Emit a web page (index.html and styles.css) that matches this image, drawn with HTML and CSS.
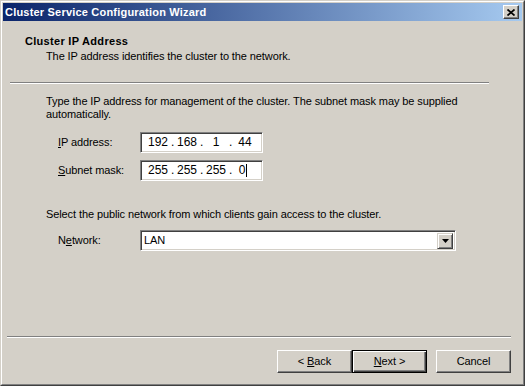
FILE: index.html
```html
<!DOCTYPE html>
<html>
<head>
<meta charset="utf-8">
<link rel="stylesheet" href="styles.css">
</head>
<body>
<div class="window">
  <div class="frame">
    <div class="titlebar">
      <span class="title">Cluster Service Configuration Wizard</span>
      <span class="close"><svg width="8" height="7" viewBox="0 0 8 7"><path d="M0.5 0.5 L7.5 6.5 M7.5 0.5 L0.5 6.5" stroke="#000" stroke-width="1.7" fill="none"/></svg></span>
    </div>
    <div class="body">
      <div class="header">
        <div class="h-title">Cluster IP Address</div>
        <div class="h-sub">The IP address identifies the cluster to the network.</div>
      </div>
      <div class="sep sep-top"></div>
      <p class="para p1">Type the IP address for management of the cluster. The subnet mask may be supplied<br>automatically.</p>
      <div class="row r1">
        <span class="lbl"><u>I</u>P address:</span>
        <div class="field ipbox">
          <span class="oct">192</span><span class="dot">.</span><span class="oct">168</span><span class="dot">.</span><span class="oct">1</span><span class="dot">.</span><span class="oct">44</span>
        </div>
      </div>
      <div class="row r2">
        <span class="lbl"><u>S</u>ubnet mask:</span>
        <div class="field ipbox">
          <span class="oct">255</span><span class="dot">.</span><span class="oct">255</span><span class="dot">.</span><span class="oct">255</span><span class="dot">.</span><span class="oct last">0<span class="caret"></span></span>
        </div>
      </div>
      <p class="para p2">Select the public network from which clients gain access to the cluster.</p>
      <div class="row r3">
        <span class="lbl">N<u>e</u>twork:</span>
        <div class="field combo">
          <span class="combo-text">LAN</span>
          <span class="drop"><svg width="7" height="4" viewBox="0 0 7 4"><path d="M0 0 H7 L3.5 4 Z" fill="#000"/></svg></span>
        </div>
      </div>
      <div class="footer">
        <div class="sep sep-bottom"></div>
        <div class="buttons">
          <span class="btn"><span>&lt; <u>B</u>ack</span></span>
          <span class="btn default"><span><u>N</u>ext &gt;</span></span>
          <span class="btn cancel"><span>Cancel</span></span>
        </div>
      </div>
    </div>
  </div>
</div>
</body>
</html>
```

FILE: styles.css
```css
html, body {
  margin: 0;
  padding: 0;
  background: #d4d0c8;
}
body {
  font-family: "Liberation Sans", Arial, sans-serif;
  font-size: 11px;
  line-height: 13px;
  letter-spacing: -0.1px;
  color: #000;
}
.window {
  width: 525px;
  height: 386px;
  box-sizing: border-box;
  border: 1px solid;
  border-color: #d4d0c8 #404040 #404040 #d4d0c8;
  background: #d4d0c8;
}
.frame {
  height: 100%;
  box-sizing: border-box;
  border: 1px solid;
  border-color: #fff #808080 #808080 #fff;
  padding: 1px;
  display: flex;
  flex-direction: column;
}
.titlebar {
  height: 18px;
  margin-bottom: 1px;
  background: linear-gradient(to right, #0a246a, #a6caf0);
  display: flex;
  align-items: center;
  justify-content: space-between;
}
.title {
  color: #fff;
  font-weight: bold;
  font-size: 11px;
  line-height: 18px;
  letter-spacing: 0.2px;
  padding-left: 2px;
}
.close {
  width: 16px;
  height: 14px;
  box-sizing: border-box;
  margin-right: 3px;
  background: #d4d0c8;
  border: 1px solid;
  border-color: #fff #404040 #404040 #fff;
  box-shadow: inset -1px -1px #808080;
  display: flex;
  align-items: center;
  justify-content: center;
}
.close svg {
  display: block;
  margin-left: -1px;
}
.body {
  flex: 1;
  display: flex;
  flex-direction: column;
}
.header {
  padding-top: 13px;
}
.h-title {
  font-weight: bold;
  letter-spacing: 0.3px;
  padding-left: 22px;
}
.h-sub {
  padding-left: 43px;
  margin-top: 2px;
}
.sep {
  border-top: 1px solid #808080;
  border-bottom: 1px solid #fff;
  height: 0;
}
.sep-top {
  margin-top: 19px;
  margin-left: 7px;
  width: 479px;
}
.para {
  margin: 0;
  padding-left: 43px;
}
.p1 {
  margin-top: 11px;
}
.p2 {
  margin-top: 27px;
}
.row {
  display: flex;
  align-items: center;
  padding-left: 55px;
}
.r1 {
  margin-top: 11px;
}
.r2 {
  margin-top: 7px;
}
.r3 {
  margin-top: 9px;
}
.lbl {
  width: 82px;
}
.field {
  box-sizing: border-box;
  height: 21px;
  background: #fff;
  border: 1px solid;
  border-color: #808080 #fff #fff #808080;
  box-shadow: inset 1px 1px #404040, inset -1px -1px #d4d0c8;
  display: flex;
  align-items: center;
}
.ipbox {
  width: 123px;
  padding-left: 4px;
  font-size: 12px;
  letter-spacing: 0;
}
.oct {
  width: 26px;
  text-align: center;
}
.oct.last {
  display: flex;
  justify-content: center;
  align-items: center;
  padding-right: 4px;
  box-sizing: border-box;
}
.caret {
  display: inline-block;
  width: 1px;
  height: 13px;
  background: #000;
  margin-left: 1px;
}
.dot {
  width: 3px;
  text-align: center;
}
.combo {
  width: 316px;
  justify-content: space-between;
  padding: 2px;
}
.combo-text {
  padding-left: 1px;
}
.drop {
  width: 16px;
  height: 16px;
  box-sizing: border-box;
  background: #d4d0c8;
  border: 1px solid;
  border-color: #d4d0c8 #404040 #404040 #d4d0c8;
  box-shadow: inset 1px 1px #fff, inset -1px -1px #808080;
  display: flex;
  align-items: center;
  justify-content: center;
}
.drop svg {
  display: block;
}
.footer {
  margin-top: auto;
  padding-bottom: 10px;
}
.sep-bottom {
  margin-left: 4px;
  margin-right: 11px;
}
.buttons {
  margin-top: 12px;
  display: flex;
  justify-content: flex-end;
  padding-right: 11px;
}
.btn {
  width: 75px;
  height: 23px;
  box-sizing: border-box;
  background: #d4d0c8;
  border: 1px solid;
  border-color: #fff #404040 #404040 #fff;
  box-shadow: inset -1px -1px #808080;
  display: flex;
  align-items: center;
  justify-content: center;
}
.btn.default {
  border-color: #000;
  box-shadow: inset 1px 1px #fff, inset -1px -1px #404040, inset -2px -2px #808080;
}
.btn.cancel {
  margin-left: 9px;
}
```
